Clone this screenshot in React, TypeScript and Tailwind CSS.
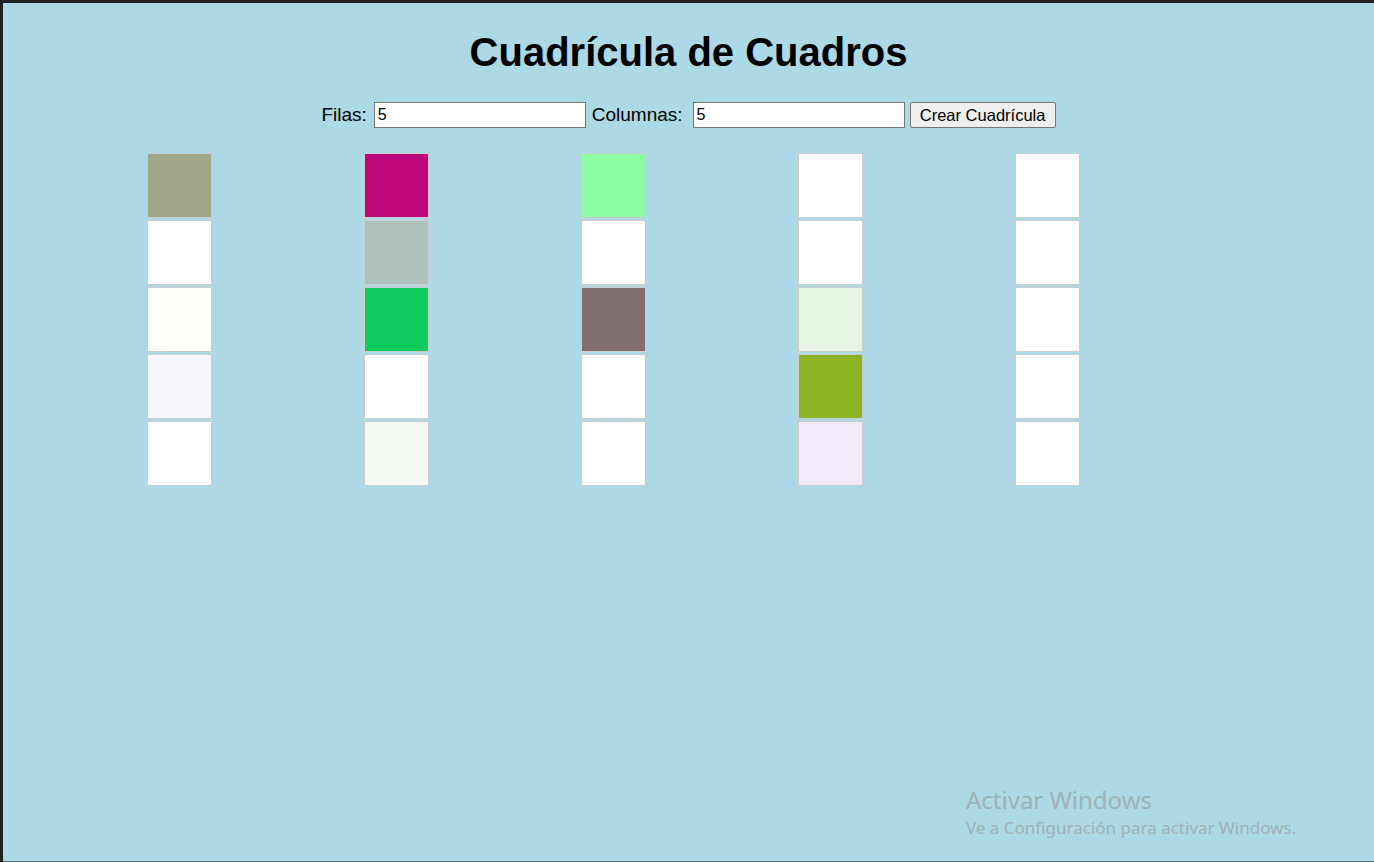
import React from "react";

const W = "#ffffff";
const columns: string[][] = [
  ["#a0a688", W, "#fdfef8", "#f8f6fd", W],
  ["#bd0679", "#adc2bc", "#0ecc5e", W, "#f4f9f4"],
  ["#8cfda3", W, "#826e71", W, W],
  [W, W, "#e6f4e4", "#8bb427", "#f2eaf9"],
  [W, W, W, W, W],
];

export default function App() {
  return (
    <div
      className="w-[1374px] h-[862px] bg-[#202020] pt-[3px] pl-[3px] flex flex-col overflow-hidden"
      style={{ fontFamily: '"Liberation Sans", Arial, sans-serif' }}
    >
      <div className="relative flex-1 bg-[#add8e6] border-b border-[#4f6b77] flex flex-col items-center">
        <h1 className="mt-[26px] text-[40px] leading-[46px] font-bold text-black">
          Cuadrícula de Cuadros
        </h1>
        <div className="mt-[27px] flex items-center h-[26px] text-[19px] text-black">
          <label>Filas:</label>
          <input
            readOnly
            value="5"
            className="ml-[7px] w-[212px] h-[26px] border border-[#767676] bg-white pl-[3px] text-[16px] text-black outline-none"
          />
          <label className="ml-[6px]">Columnas:</label>
          <input
            readOnly
            value="5"
            className="ml-[10px] w-[212px] h-[26px] border border-[#767676] bg-white pl-[3px] text-[16px] text-black outline-none"
          />
          <button className="ml-[5px] w-[146px] h-[26px] border border-[#767676] rounded-[2px] bg-[#efefef] text-[16.5px] text-black">
            Crear Cuadrícula
          </button>
        </div>
        <div className="mt-[25px] w-[1085px] grid grid-cols-5 translate-x-[1px]">
          {columns.map((col, ci) => (
            <div key={ci} className="flex flex-col gap-[2px]">
              {col.map((c, ri) => (
                <div
                  key={ri}
                  className="w-[65px] h-[65px] border border-[#cccccc]"
                  style={{ backgroundColor: c }}
                />
              ))}
            </div>
          ))}
        </div>
        <div
          className="absolute left-[963px] top-[782px] text-[#9fb0b6]"
          style={{ fontFamily: '"Noto Sans", "Open Sans", sans-serif' }}
        >
          <div className="text-[24px] leading-[30px]">Activar Windows</div>
          <div className="text-[17px] leading-[22px] mt-[2px]">
            Ve a Configuración para activar Windows.
          </div>
        </div>
      </div>
    </div>
  );
}
